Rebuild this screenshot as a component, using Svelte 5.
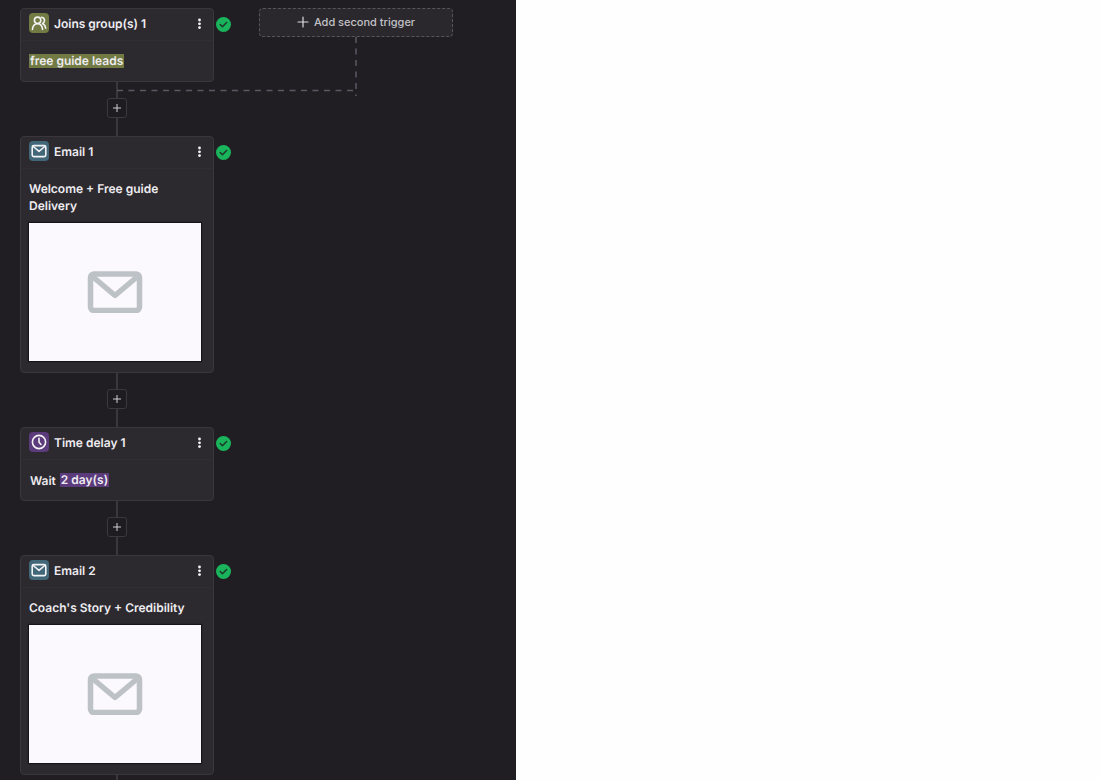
<script>
  const steps = [
    { kind: 'group', title: 'Joins group(s) 1', tag: 'free guide leads' },
    { kind: 'email', title: 'Email 1', subject: 'Welcome + Free guide Delivery' },
    { kind: 'delay', title: 'Time delay 1', text: 'Wait', tag: '2 day(s)' },
    { kind: 'email', title: 'Email 2', subject: "Coach's Story + Credibility" }
  ];
</script>

<div class="page">
  <main class="canvas">
    <div class="flow">
      {#each steps as step, i}
        <div class="row">
          <article class="card">
            <header>
              <span class="icon {step.kind}">
                {#if step.kind === 'group'}
                  <svg viewBox="0 0 20 20" aria-hidden="true">
                    <circle cx="8.6" cy="7.3" r="3.2" />
                    <path d="M3.4 16.4c.4-3.4 2.3-5.6 5.200-5.6s4.6 2.200 5 5.600" />
                    <path d="M12.6 4.200c1.900.3 2.900 1.500 2.900 3.200 0 1.400-.8 2.500-2 3.100 1.800.9 2.900 2.500 3.200 4.700" />
                  </svg>
                {:else if step.kind === 'email'}
                  <svg viewBox="0 0 20 20" aria-hidden="true">
                    <rect x="3.2" y="4.6" width="13.6" height="11" rx="1.6" />
                    <path d="M4.2 5.5L10 10.3l5.8-4.8" />
                  </svg>
                {:else}
                  <svg viewBox="0 0 20 20" aria-hidden="true">
                    <circle cx="10" cy="10" r="6.6" />
                    <path d="M10 6.3v4l2 2.2" />
                  </svg>
                {/if}
              </span>
              <h2>{step.title}</h2>
              <button class="menu" aria-label="{step.title} options">
                <svg viewBox="0 0 4 12" aria-hidden="true">
                  <circle cx="1.5" cy="3" r="1.4" />
                  <circle cx="1.5" cy="6.8" r="1.4" />
                  <circle cx="1.5" cy="10.6" r="1.4" />
                </svg>
              </button>
            </header>

            <div class="body">
              {#if step.subject}
                <p class="subject">{step.subject}</p>
                <div class="preview">
                  <svg viewBox="0 0 56 42" aria-hidden="true">
                    <rect x="3.5" y="3" width="49" height="36.5" rx="3.5" />
                    <path d="M5.5 5.5L28 24.5 50.5 5.5" />
                  </svg>
                </div>
              {:else}
                <p class="detail">
                  {#if step.text}<span class="word">{step.text}</span>{/if}
                  <span class="tag {step.kind}">{step.tag}</span>
                </p>
              {/if}
            </div>
          </article>

          <svg class="status" viewBox="0 0 15 15" role="img" aria-label="Complete">
            <circle cx="7.5" cy="7.5" r="7.5" />
            <path d="M4.2 7.5l2.2 2.2 4.2-4.2" />
          </svg>

          {#if i === 0}
            <div class="second">
              <button class="add-trigger">
                <svg viewBox="0 0 12 12" aria-hidden="true"><path d="M6 1v10M1 6h10" /></svg>
                Add second trigger
              </button>
              <svg class="branch" viewBox="0 0 242 60" aria-hidden="true">
                <path d="M240 0V59" />
                <path d="M1 53.5H239" />
              </svg>
            </div>
          {/if}
        </div>

        <div class="connector">
          <button aria-label="Add step">
            <svg viewBox="0 0 8 8" aria-hidden="true"><path d="M4 0v8M0 4h8" /></svg>
          </button>
        </div>
      {/each}
    </div>
  </main>
</div>

<style>
  :global(body) {
    margin: 0;
    background: #fefefe;
  }

  .page {
    display: grid;
    grid-template-columns: 129fr 146fr;
    height: 100vh;
    overflow: hidden;
    font-family: Inter, "Liberation Sans", sans-serif;
    text-rendering: geometricPrecision;
  }

  .canvas {
    min-width: 0;
    overflow: hidden;
    background: #201e22;
    color: #eeecf1;
  }

  .flow {
    padding: 8px 20px;
  }

  .row {
    display: flex;
    align-items: flex-start;
  }

  .card {
    box-sizing: border-box;
    flex: none;
    width: 194px;
    min-height: 74px;
    background: #2c2a2e;
    border: 1px solid #39373c;
    border-radius: 4px;
  }

  header {
    display: flex;
    align-items: center;
    gap: 5px;
    padding: 4px 11px 7px 8px;
    border-bottom: 1px solid #302e33;
  }

  h2,
  p {
    margin: 0;
    font-size: 12px;
    line-height: 17px;
    font-weight: 600;
  }

  h2 {
    flex: 1;
  }

  button {
    padding: 0;
    border: 0;
    background: none;
    font: inherit;
    cursor: pointer;
  }

  svg {
    display: block;
    fill: none;
    stroke-linecap: round;
    stroke-linejoin: round;
  }

  .icon {
    width: 20px;
    height: 20px;
    border-radius: 4px;
  }

  .icon svg {
    stroke: #f3f3f5;
    stroke-width: 1.6;
  }

  .group {
    background: #717b43;
  }

  .email {
    background: #416778;
  }

  .delay {
    background: #5b3b7b;
  }

  .menu svg {
    width: 4px;
    height: 12px;
    fill: #f3f3f5;
  }

  .body {
    padding: 11px 12px 11px 8px;
  }

  .subject {
    margin-bottom: 9px;
  }

  .preview {
    display: flex;
    align-items: center;
    justify-content: center;
    height: 138px;
    background: #fbf9fd;
    box-shadow: 0 0 1px 1px #171519;
  }

  .preview svg {
    width: 56px;
    height: 42px;
    stroke: #bdc2c7;
    stroke-width: 5.5;
  }

  .detail {
    display: flex;
    align-items: center;
    gap: 4px;
    min-height: 18px;
  }

  .word {
    padding-left: 1px;
  }

  .tag {
    padding: 0 1px;
    line-height: 14px;
  }

  .status {
    flex: none;
    width: 15px;
    height: 15px;
    margin: 9px 0 0 2px;
    fill: #19b45b;
  }

  .status path {
    fill: none;
    stroke: #1d3a2a;
    stroke-width: 1.6;
  }

  .second {
    position: relative;
    margin-left: 28px;
  }

  .add-trigger {
    box-sizing: border-box;
    display: flex;
    align-items: center;
    justify-content: center;
    gap: 5px;
    width: 194px;
    height: 29px;
    padding-bottom: 1px;
    border: 1px dashed #57555b;
    border-radius: 4px;
    background: #2a282c;
    color: #c2c0c6;
    font-size: 11px;
    font-weight: 500;
  }

  .add-trigger svg {
    width: 12px;
    height: 12px;
    stroke: #dddbe0;
    stroke-width: 1.2;
  }

  /* runs from the second trigger back to the main line */
  .branch {
    position: absolute;
    top: 29px;
    right: 95px;
    width: 242px;
    height: 60px;
    stroke: #5a5864;
    stroke-width: 1.5;
    stroke-dasharray: 6 5.5;
    stroke-linecap: butt;
    pointer-events: none;
  }

  .connector {
    display: flex;
    flex-direction: column;
    align-items: center;
    width: 194px;
    height: 54px;
  }

  .connector::before,
  .connector::after {
    content: "";
    width: 2px;
    height: 16px;
    background: #3a383d;
  }

  .connector::after {
    flex: 1;
  }

  .connector button {
    box-sizing: border-box;
    display: grid;
    place-items: center;
    width: 20px;
    height: 20px;
    border: 1px solid #3b393e;
    border-radius: 3px;
    background: #1e1c20;
  }

  .connector svg {
    width: 8px;
    height: 8px;
    stroke: #d0ced3;
    stroke-width: 1;
  }
</style>
